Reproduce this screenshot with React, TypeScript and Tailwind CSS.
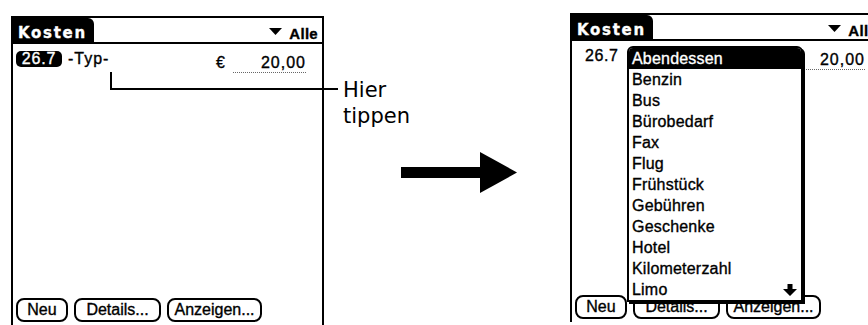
const items = [
  'Abendessen',
  'Benzin',
  'Bus',
  'Bürobedarf',
  'Fax',
  'Flug',
  'Frühstück',
  'Gebühren',
  'Geschenke',
  'Hotel',
  'Kilometerzahl',
  'Limo',
]

function Triangle() {
  return (
    <svg width="13" height="7" viewBox="0 0 13 7" className="mt-[2px] shrink-0">
      <path d="M0 0h13L6.5 7z" fill="black" />
    </svg>
  )
}

function DownArrow() {
  return (
    <svg width="14" height="12" viewBox="0 0 14 12">
      <path d="M4.5 0h5v5H14L7 12 0 5h4.5z" fill="black" />
    </svg>
  )
}

function Btn({ w, children }: { w: string; children: string }) {
  return (
    <div
      className={`${w} h-[24px] border-2 border-black rounded-[8px] flex items-center justify-center text-[16px] leading-none`}
    >
      {children}
    </div>
  )
}

function Header() {
  return (
    <div className="h-[26px] flex border-b-2 border-black">
      <div className="w-[81px] bg-black rounded-tr-[6px] text-white font-['DejaVu_Sans',sans-serif] font-bold text-[15px] leading-[15px] tracking-[1.7px] pl-[5px] pt-[8px]">
        Kosten
      </div>
      <div className="flex-1 flex items-start justify-end gap-[7px] pr-[4px] pt-[8px]">
        <Triangle />
        <span className="font-bold text-[15px] leading-[15px] tracking-[0.3px]">Alle</span>
      </div>
    </div>
  )
}

function Screen({ open }: { open?: boolean }) {
  return (
    <div
      className={`${open ? 'mt-[13px]' : 'mt-[16px]'} w-[313px] h-[309px] shrink-0 border-x-2 border-t-2 border-black flex flex-col relative font-['Liberation_Sans',Arial,sans-serif] text-black [-webkit-text-stroke:0.35px]`}
    >
      <Header />
      <div className="mt-[7px] flex items-start text-[16px] leading-[16px] tracking-[1px]">
        {open ? (
          <div className="ml-[13px] h-[16px] tracking-[0.6px]">26.7</div>
        ) : (
          <>
            <div className="ml-[3px] w-[46px] h-[16px] bg-black rounded-[5px] text-white text-center tracking-[0.8px]">
              26.7
            </div>
            <div className="ml-[6px]">-Typ-</div>
          </>
        )}
        <div className="flex-1" />
        <div className="pt-[4px]">€</div>
        <div className="ml-[7px] mr-[16px] w-[73px] h-[22px] pt-[4px] text-right border-b border-dotted border-[#666] tracking-[1px]">
          20,00
        </div>
      </div>
      <div className="flex-1" />
      <div className="flex gap-[6px] pl-[3px] pb-[3px]">
        <Btn w="w-[52px]">Neu</Btn>
        <Btn w="w-[87px]">Details...</Btn>
        <Btn w="w-[95px]">Anzeigen...</Btn>
      </div>

      {open && (
        <div className="absolute left-[55px] top-[31px] w-[176px] h-[256px] bg-white border-2 border-black rounded-t-[6px] shadow-[2px_2px_0_#000] text-[16px] leading-[21px] tracking-[0.2px] z-10">
          {items.map((it, i) => (
            <div
              key={it}
              className={`h-[21px] pl-[3px] ${i === 0 ? 'bg-black text-white rounded-t-[4px]' : ''}`}
            >
              {it}
            </div>
          ))}
          <div className="absolute right-[4px] bottom-[4px]">
            <DownArrow />
          </div>
        </div>
      )}
    </div>
  )
}

export default function App() {
  return (
    <div className="w-[868px] h-[325px] overflow-hidden bg-white relative flex">
      <div className="ml-[11px] flex">
        <Screen />
      </div>

      <div className="w-[246px] shrink-0 flex flex-col pl-[19px] pt-[77px]">
        <div className="font-['DejaVu_Sans',sans-serif] text-[21px] leading-[26px] text-black">
          Hier
          <br />
          tippen
        </div>
        <svg width="116" height="41" viewBox="0 0 116 41" className="mt-[23px] ml-[58px]">
          <rect x="0" y="15" width="80" height="11" fill="black" />
          <path d="M79 0L116 20.5 79 41z" fill="black" />
        </svg>
      </div>

      <Screen open />

      {/* callout line from "-Typ-" to the label */}
      <div className="absolute left-[110px] top-[72px] w-[2px] h-[18px] bg-black" />
      <div className="absolute left-[110px] top-[88px] w-[228px] h-[2px] bg-black" />
    </div>
  )
}
